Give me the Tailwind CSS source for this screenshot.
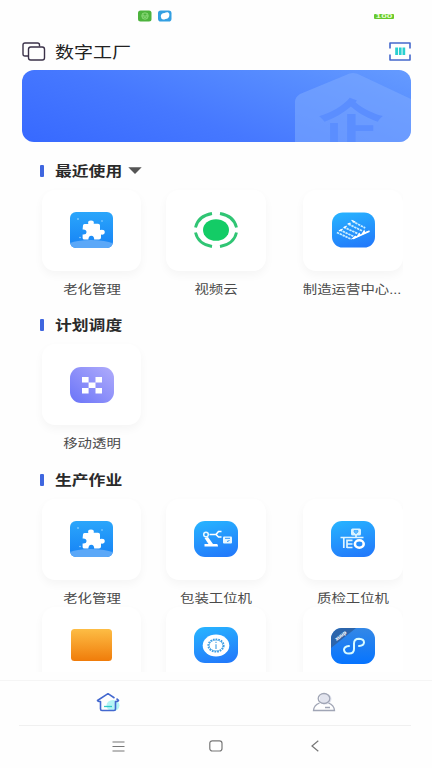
<!DOCTYPE html>
<html lang="zh-CN">
<head>
<meta charset="utf-8">
<title>数字工厂</title>
<script src="https://cdn.jsdelivr.net/npm/@tailwindcss/browser@4"></script>
</head>
<body class="bg-[#fefefe]">
<svg class="absolute h-0 w-0">
  <defs>
    <linearGradient id="blue" x1="0.3" y1="0" x2="0.6" y2="1"><stop stop-color="#27b1ff"/><stop offset="1" stop-color="#227bfb"/></linearGradient>
    <linearGradient id="pz" x1="0" y1="0" x2="0" y2="1"><stop stop-color="#2ba6fb"/><stop offset="1" stop-color="#1682f5"/></linearGradient>
    <linearGradient id="purple" x1="1" y1="0" x2="0" y2="1"><stop stop-color="#b0acfb"/><stop offset="1" stop-color="#6a74f8"/></linearGradient>
    <linearGradient id="orange" x1="0" y1="0" x2="0" y2="1"><stop stop-color="#fdbd45"/><stop offset="1" stop-color="#f07c0a"/></linearGradient>
    <linearGradient id="deep" x1="0" y1="0" x2="0" y2="1"><stop stop-color="#3488e6"/><stop offset="1" stop-color="#0674ff"/></linearGradient>
    <clipPath id="round"><rect width="43" height="36" rx="6"/></clipPath>
    <clipPath id="round2"><rect width="44" height="36" rx="11"/></clipPath>
    <symbol id="puzzle" viewBox="0 0 43 36">
      <g clip-path="url(#round)"><rect width="43" height="36" fill="url(#pz)"/>
      <ellipse cx="21" cy="42" rx="34" ry="14" fill="#5ba8f8"/></g>
      <path d="M13 13.5Q13 12 14.500 12H18.300Q17.300 8.600 21 8.600Q24.500 8.600 23.700 11.800H28Q30 11.800 30 13.500V18Q34.800 17.200 34.800 20.300Q34.800 23.200 31 22.500V25.500Q31 27.500 29 27.500H24.200Q24.200 23.700 21.300 23.700Q18.400 23.700 18.400 27.500H14.500Q12.600 27.500 12.600 26V22.500Q16.500 22.800 16.500 20Q16.500 17.200 12.600 17.500Z" fill="#fff"/>
      <g fill="#b5e3ff"><circle cx="8" cy="7" r=".8"/><circle cx="32" cy="9" r=".7"/><circle cx="10" cy="25.500" r=".7"/></g>
    </symbol>
  </defs>
</svg>

<div class="flex h-[768px] w-[432px] flex-col overflow-hidden bg-[#fefefe] font-['Noto_Sans_CJK_SC','Noto_Sans',sans-serif] text-[#222]">
  <div class="flex h-8 shrink-0 items-center pl-[138px] pr-[38px]">
    <svg class="h-3 w-[14px]" viewBox="0 0 14 12"><rect y=".5" width="13.500" height="11" rx="2.500" fill="#4db33d"/><path d="M4.500 3.500Q7 2.300 9.500 3.500Q11 6 9.300 8.500Q7 9.800 4.700 8.500Q3 6 4.500 3.500M4 6H10M5.500 4.500V5.500M8.500 4.500V5.500M5.500 7.300H8.500" fill="none" stroke="#a8eb95" stroke-width=".7"/></svg>
    <svg class="ml-[6px] h-3 w-[14px]" viewBox="0 0 14 12"><rect y=".5" width="13.500" height="11" rx="2.800" fill="#339fe2"/><path d="M2.800 6.500Q2.800 3 6.500 3Q8 2 10 2.300Q12 3.500 11.300 6Q10.500 9 7.500 9Q5 10.300 3.500 8.800Z" fill="#fff"/></svg>
    <div class="ml-auto flex h-[5px] w-5 items-center justify-center rounded-[1px] bg-[#66c92c]"><span class="scale-x-[1.700] font-['Liberation_Sans',sans-serif] text-[6px] leading-none font-bold text-[#e6ffd4]">100</span></div>
  </div>

  <header class="flex h-[38px] shrink-0 items-center pl-[22px] pr-[21px]">
    <svg class="h-[19px] w-6" viewBox="0 0 24 19" fill="none" stroke="#3a3148" stroke-width="1.400"><path d="M6 14H3Q1 14 1 12V3Q1 1 3 1H15.500Q17.500 1 17.500 3V4.500"/><rect x="6.500" y="5" width="16" height="13" rx="2.200"/></svg>
    <h1 class="ml-[9px] origin-left scale-x-[1.220] text-[15.600px] leading-6 text-[#222]">数字工厂</h1>
    <svg class="ml-auto h-[19px] w-[22px]" viewBox="0 0 22 19"><path d="M1 6.500V1H21V6.500M1 12.500V18H21V12.500" fill="none" stroke="#4468cc" stroke-width="1.600" stroke-linejoin="round"/><path d="M6.200 5.500H9V13H6.200ZM9.900 5.500H12.600V13H9.900ZM13.500 5.500H16.200V13H13.500Z" fill="#29cfd0"/></svg>
  </header>

  <div class="ml-[22px] h-[72px] w-[389px] shrink-0 overflow-hidden rounded-[12px] bg-[linear-gradient(20deg,#3769ff_0%,#4678ff_40%,#598fff_80%,#659bff_100%)]">
    <svg class="h-[72px] w-[389px]" viewBox="0 0 389 72">
      <path d="M273 72V32Q273 27 278 24L324 5Q331 1 338 5L389 29V72Z" fill="#7ba8ff" fill-opacity=".6"/>
      <text transform="translate(296 75) scale(1.220 1)" font-family="Noto Sans CJK SC, sans-serif" font-weight="700" font-size="54" fill="#5b8eff">企</text>
    </svg>
  </div>

  <main class="h-[530px] w-[403px] shrink-0 overflow-hidden pl-[39px] pt-[16.500px]">
    <section class="h-[154.500px]">
      <h2 class="flex h-6 items-center"><i class="ml-px h-3 w-1 rounded-[1px] bg-[#3f66df]"></i><span class="ml-[11px] origin-left -translate-y-px scale-x-[1.200] text-[14px] leading-6 font-bold text-[#2a2a2a]">最近使用</span><svg class="ml-[17px] h-[7px] w-[14px]" viewBox="0 0 14 7"><path d="M.3.300H13.700L7 7Z" fill="#555"/></svg></h2>
      <div class="ml-[3px] mt-[7px] flex w-[361px] shrink-0">
        <div class="flex w-[99px] shrink-0 flex-col items-center">
          <div class="flex h-[81px] w-full items-center justify-center rounded-[13px] bg-white shadow-[0_4px_10px_rgba(0,0,0,0.040)]"><svg class="h-9 w-[43px]"><use href="#puzzle"/></svg></div>
          <span class="mt-2 translate-x-px scale-x-[1.200] text-[12px] leading-5 whitespace-nowrap text-[#4a4a4a]">老化管理</span>
        </div>
        <div class="ml-[25px] flex w-[100px] shrink-0 flex-col items-center">
          <div class="flex h-[81px] w-full items-center justify-center rounded-[13px] bg-white shadow-[0_4px_10px_rgba(0,0,0,0.040)]">
            <svg class="h-9 w-11" viewBox="0 0 44 36"><ellipse cx="22" cy="18" rx="13" ry="10.800" fill="#13cc66"/><path d="M1.500 15.500Q4 4 18 1.500M26 1.500Q40 4 42.500 15.500M42.500 20.500Q40 32 26 34.500M18 34.500Q4 32 1.500 20.500" fill="none" stroke="#30c574" stroke-width="2.800"/></svg>
          </div>
          <span class="mt-2 scale-x-[1.200] text-[12px] leading-5 whitespace-nowrap text-[#4a4a4a]">视频云</span>
        </div>
        <div class="ml-[37px] flex w-[100px] shrink-0 flex-col items-center">
          <div class="flex h-[81px] w-full items-center justify-center rounded-[13px] bg-white shadow-[0_4px_10px_rgba(0,0,0,0.040)]">
            <svg class="h-9 w-[43px]" viewBox="0 0 44 36"><rect width="44" height="36" rx="11" fill="url(#blue)"/><path d="M21 9L34 16M17 12L31 19M12 15L27 22M8 18L23 25M5 20.500L20 27.500" stroke="#c9edff" stroke-width="1.800" stroke-dasharray="2.500 .7"/><path d="M20 8L24 10M16 12L19 11M12 16L15 14M7 19L11 17M21 27L38 19" stroke="#fff" stroke-width="1.200"/><path d="M20 27L24 23.500L25 25L28 20.500L29.500 23L33 17.500L34 20L38.500 18.500V20L22 27.500Z" fill="#fff"/></svg>
          </div>
          <span class="mt-2 -translate-x-px scale-x-[1.200] text-[12px] leading-5 whitespace-nowrap text-[#4a4a4a]">制造运营中心<span class="font-['Liberation_Sans']">...</span></span>
        </div>
      </div>
    </section>

    <section class="h-[154.500px]">
      <h2 class="flex h-6 items-center"><i class="ml-px h-3 w-1 rounded-[1px] bg-[#3f66df]"></i><span class="ml-[11px] origin-left -translate-y-px scale-x-[1.200] text-[14px] leading-6 font-bold text-[#2a2a2a]">计划调度</span></h2>
      <div class="ml-[3px] mt-[7px] flex">
        <div class="flex w-[99px] shrink-0 flex-col items-center">
          <div class="flex h-[81px] w-full items-center justify-center rounded-[13px] bg-white shadow-[0_4px_10px_rgba(0,0,0,0.040)]">
            <svg class="h-9 w-11" viewBox="0 0 44 36"><rect width="44" height="36" rx="11" fill="url(#purple)"/><path d="M12 10H18.600V15.500H12ZM25.500 10H32V15.500H25.500ZM18.600 15.500H25.500V21H18.600ZM12 21H18.600V26.500H12ZM25.500 21H32V26.500H25.500Z" fill="#fff"/></svg>
          </div>
          <span class="mt-2 translate-x-px scale-x-[1.200] text-[12px] leading-5 whitespace-nowrap text-[#4a4a4a]">移动透明</span>
        </div>
      </div>
    </section>

    <section>
      <h2 class="flex h-6 items-center"><i class="ml-px h-3 w-1 rounded-[1px] bg-[#3f66df]"></i><span class="ml-[11px] origin-left -translate-y-px scale-x-[1.200] text-[14px] leading-6 font-bold text-[#2a2a2a]">生产作业</span></h2>
      <div class="ml-[3px] mt-[7px] flex h-[108px]">
        <div class="flex w-[99px] shrink-0 flex-col items-center">
          <div class="flex h-[81px] w-full shrink-0 items-center justify-center rounded-[13px] bg-white shadow-[0_4px_10px_rgba(0,0,0,0.040)]"><svg class="h-9 w-[43px]"><use href="#puzzle"/></svg></div>
          <span class="mt-2 translate-x-px scale-x-[1.200] text-[12px] leading-5 whitespace-nowrap text-[#4a4a4a]">老化管理</span>
        </div>
        <div class="ml-[25px] flex w-[100px] shrink-0 flex-col items-center">
          <div class="flex h-[81px] w-full shrink-0 items-center justify-center rounded-[13px] bg-white shadow-[0_4px_10px_rgba(0,0,0,0.040)]">
            <svg class="h-9 w-11" viewBox="0 0 44 36"><rect width="44" height="36" rx="11" fill="url(#blue)"/><circle cx="12" cy="13.500" r="2.300" fill="none" stroke="#e8f8ff" stroke-width="1.500"/><path d="M10.500 17L14 16L19 23H23Q24 23 24 25.500H10.500V23H14.500Z" fill="#fff"/><path d="M15.500 13.500H22M27.500 10.500H24.500L22 13.500L24.500 16H27.500" fill="none" stroke="#fff" stroke-width="1.600"/><rect x="29" y="15.500" width="9" height="7" rx="1" fill="#e8f8ff"/><path d="M31 17.300H36M33 20.500L35.500 19.500" stroke="#2894fd"/></svg>
          </div>
          <span class="mt-2 scale-x-[1.200] text-[12px] leading-5 whitespace-nowrap text-[#4a4a4a]">包装工位机</span>
        </div>
        <div class="ml-[37px] flex w-[100px] shrink-0 flex-col items-center">
          <div class="flex h-[81px] w-full shrink-0 items-center justify-center rounded-[13px] bg-white shadow-[0_4px_10px_rgba(0,0,0,0.040)]">
            <svg class="h-9 w-11" viewBox="0 0 44 36"><rect width="44" height="36" rx="11" fill="url(#blue)"/><rect x="20" y="7.500" width="10" height="7" rx="1.500" fill="#d9f3ff"/><path d="M23 9.500H27V11L25 12.800L23 11Z" fill="#61baff" stroke="#249dff" stroke-width=".6"/><path d="M25 14V16.500M9.500 16.500H32.500M12.800 16.500V27M16 19.300H21.500M16 23H21.500M16 26.500H21.500M16 18.500V27" fill="none" stroke="#dff5ff" stroke-width="1.700"/><ellipse cx="28.300" cy="23" rx="4.400" ry="3.700" fill="none" stroke="#fff" stroke-width="2.600"/></svg>
          </div>
          <span class="mt-2 scale-x-[1.200] text-[12px] leading-5 whitespace-nowrap text-[#4a4a4a]">质检工位机</span>
        </div>
      </div>
      <div class="ml-[3px] flex">
        <div class="flex h-[81px] w-[99px] shrink-0 items-center justify-center rounded-[13px] bg-white pb-1 shadow-[0_4px_10px_rgba(0,0,0,0.040)]">
          <svg class="h-8 w-[41px]" viewBox="0 0 41 32"><rect width="41" height="32" rx="3.500" fill="url(#orange)"/></svg>
        </div>
        <div class="ml-[25px] flex h-[81px] w-[100px] shrink-0 items-center justify-center rounded-[13px] bg-white pb-1 shadow-[0_4px_10px_rgba(0,0,0,0.040)]">
          <svg class="h-9 w-11" viewBox="0 0 44 36"><rect width="44" height="36" rx="11" fill="url(#blue)"/><ellipse cx="22" cy="18.500" rx="13.300" ry="11" fill="#fff"/><ellipse cx="22" cy="18.500" rx="7.800" ry="6.300" fill="none" stroke="#3c9de4" stroke-width="1.600" stroke-dasharray="1.700 1"/><ellipse cx="22" cy="18.500" rx="6.800" ry="5.400" fill="none" stroke="#3c9de4" stroke-width=".7"/><path d="M22 14.800V16M22 17.200V22" stroke="#4da5e6" stroke-width="1.200"/></svg>
        </div>
        <div class="ml-[37px] flex h-[81px] w-[100px] shrink-0 items-center justify-center rounded-[13px] bg-white pb-[3px] shadow-[0_4px_10px_rgba(0,0,0,0.040)]">
          <svg class="h-9 w-11" viewBox="0 0 44 36"><g clip-path="url(#round2)"><rect width="44" height="36" fill="url(#deep)"/><path d="M0 0H25L0 20Z" fill="#2c65ab"/></g><text transform="translate(5.500 13) rotate(-38)" font-family="DejaVu Sans, sans-serif" font-size="5" font-weight="700" fill="#fff" textLength="13">xuup</text><path d="M18 18Q13 18.500 13 21.800Q13.500 25.500 18 25.500Q23 25.500 23 21V15.500Q23 10.800 28 10.800Q33 11 33 14.500Q32.800 17.700 28 18" fill="none" stroke="#d9fbff" stroke-width="2" stroke-linecap="round"/></svg>
        </div>
      </div>
    </section>
  </main>

  <nav class="mt-2 flex h-[45px] shrink-0 items-center border-t border-[#f5f5f5]">
    <div class="flex w-1/2 justify-center"><svg class="mt-[-3px] h-5 w-6" viewBox="0 0 24 20"><ellipse cx="17" cy="13.500" rx="6.500" ry="5.500" fill="#b5f5f5"/><path d="M18.500 6L12 1.700L1.500 8.500Q1.500 9.500 4.500 9.500V17Q4.500 18.500 6 18.500H18Q19.500 18.500 19.500 17V9.500Q22.500 9.500 22.500 8.300L20.500 6.700" fill="none" stroke="#4368cf" stroke-width="1.600" stroke-linejoin="round"/><path d="M8 14.500H16" stroke="#30cbc8" stroke-width="1.300"/></svg></div>
    <div class="flex w-1/2 justify-center"><svg class="mt-[-3px] h-5 w-6" viewBox="0 0 24 20"><ellipse cx="13.500" cy="7" rx="6" ry="5.500" fill="#e2e4ee"/><ellipse cx="12" cy="6.500" rx="5.800" ry="5" fill="none" stroke="#a0a5b5" stroke-width="1.300"/><path d="M7.500 11Q2 13 1.500 18.500H22.500Q22 13 16.500 11" fill="none" stroke="#a0a5b5" stroke-width="1.300"/><path d="M13 15.500H18" stroke="#a0a5b5" stroke-width="1.500"/></svg></div>
  </nav>
  <div class="ml-[19px] flex h-[43px] w-[392px] shrink-0 items-center border-t border-[#f0f0f0]">
    <svg class="ml-[93px] mt-[-2px] h-[11px] w-[13px]" viewBox="0 0 13 11"><path d="M.5 1H12.500M.5 5.500H12.500M.5 10H12.500" stroke="#777" stroke-width="1"/></svg>
    <svg class="ml-[84px] mt-[-2px] h-3 w-[14px]" viewBox="0 0 14 12"><rect x=".8" y=".8" width="12.200" height="10.200" rx="2.500" fill="none" stroke="#777" stroke-width="1.200"/></svg>
    <svg class="ml-[88px] mt-[-2px] h-3 w-2" viewBox="0 0 8 12"><path d="M7.300.800L1 6L7.300 11.200" fill="none" stroke="#777" stroke-width="1.200"/></svg>
  </div>
</div>
</body>
</html>
